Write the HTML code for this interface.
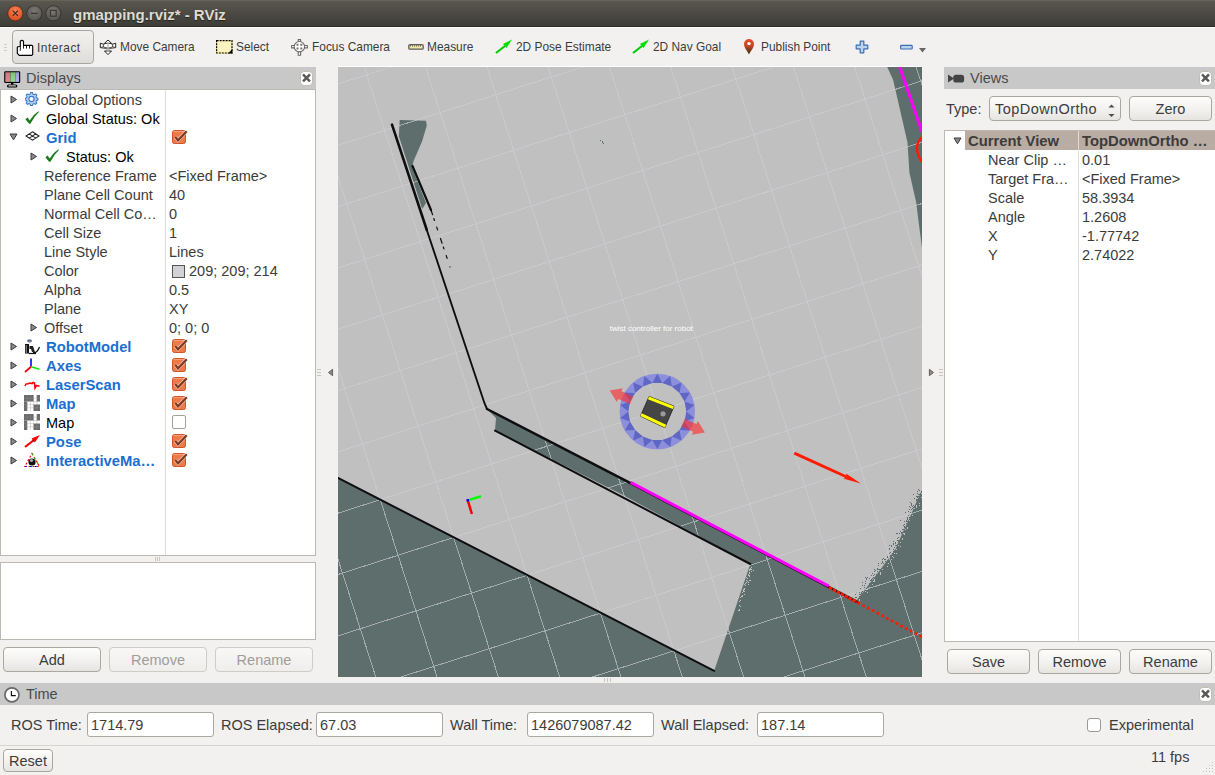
<!DOCTYPE html>
<html><head><meta charset="utf-8">
<style>
*{box-sizing:border-box}
html,body{margin:0;padding:0}
body{width:1215px;height:775px;position:relative;overflow:hidden;background:#f2f1f0;font-family:"Liberation Sans",sans-serif;color:#3c3c3c}
.a{position:absolute}
.t{position:absolute;white-space:nowrap}
.tb{position:absolute;font-size:11.9px;line-height:15px;top:40px;color:#3c3c3c;white-space:nowrap}
.hdr{position:absolute;background:#c8c8c8;height:22px;top:67px}
.r{position:absolute;height:19px;line-height:19px;font-size:14.5px;white-space:nowrap;color:#3c3c3c}
.bl{color:#1b6fd0;font-weight:bold;font-size:14.8px}
.bk{color:#000}
.cb{position:absolute;left:172px;width:14px;height:14px}
.btn{position:absolute;padding-top:1px;border:1px solid #aaa7a1;border-radius:4px;background:linear-gradient(#fdfdfc,#f1f0ee 60%,#e6e4e1);font-size:14.5px;line-height:22px;text-align:center;color:#3c3c3c}
.dis{color:#a09d98;border-color:#cfccc7;background:linear-gradient(#f8f7f6,#efeeec)}
.inp{position:absolute;background:#fff;border:1px solid #aba8a2;border-radius:3px;font-size:14.5px;line-height:22px;padding-left:3px;padding-top:1px;color:#3c3c3c;top:712px;height:25px}
.close{position:absolute;width:13px;height:15px;background:#fff;border:1px solid #c0bbb4;border-radius:4px}
</style></head>
<body>
<!-- Title bar -->
<div class="a" style="left:0;top:0;width:1215px;height:27px;background:linear-gradient(#5a574f,#3e3d38 96%);border-top:1px solid #66635a;border-bottom:1px solid #2f2e2a"></div>
<svg class="a" style="left:0;top:0" width="70" height="27">
  <defs>
    <radialGradient id="gc" cx="50%" cy="35%" r="65%"><stop offset="0" stop-color="#f68458"/><stop offset="1" stop-color="#dc4a1b"/></radialGradient>
    <radialGradient id="gg" cx="50%" cy="35%" r="65%"><stop offset="0" stop-color="#7a7871"/><stop offset="1" stop-color="#57554f"/></radialGradient>
  </defs>
  <circle cx="15.3" cy="13.3" r="7.6" fill="url(#gc)" stroke="#2f2a25" stroke-width="0.7"/>
  <path d="M12.7 10.7 L17.9 15.9 M17.9 10.7 L12.7 15.9" stroke="#3a2a20" stroke-width="1.2"/>
  <circle cx="34.3" cy="13.3" r="7.6" fill="url(#gg)" stroke="#2b2a27" stroke-width="0.7"/>
  <path d="M30.9 13.4 H37.7" stroke="#3a3935" stroke-width="1.3"/>
  <circle cx="53.3" cy="13.3" r="7.6" fill="url(#gg)" stroke="#2b2a27" stroke-width="0.7"/>
  <rect x="50.4" y="10.4" width="5.8" height="5.8" fill="none" stroke="#3a3935" stroke-width="1.2"/>
</svg>
<div class="t" style="left:73px;top:5px;font-size:15px;line-height:19px;font-weight:bold;color:#dfdbd2;text-shadow:0 1px 1px rgba(0,0,0,0.5)">gmapping.rviz* - RViz</div>

<!-- Toolbar -->
<div class="a" style="left:0;top:27px;width:1215px;height:1px;background:#fbfaf9"></div>
<div class="a" style="left:4px;top:44px;width:3px;height:1px;background:#cfccc6;box-shadow:0 3px 0 #cfccc6,0 6px 0 #cfccc6"></div>
<div class="a" style="left:12px;top:30px;width:82px;height:34px;border:1px solid #a9a6a0;border-radius:4px;background:linear-gradient(#f1f0ef,#e9e8e6 50%,#dedcd9)"></div>
<svg class="a" style="left:12px;top:34px" width="28" height="26" viewBox="0 0 28 26">
  <path d="M7.2 21.3 L5.3 19.4 L5.3 13 L8.3 12.3 L8.3 7.2 Q9.9 5.6 11.5 7.2 L11.5 11.3 L20 11.3 L20.7 12.2 L20.7 20.4 L19.8 21.3 Z" fill="#fff" stroke="#000" stroke-width="1.15" stroke-linejoin="round"/>
  <path d="M8.3 12.3 V16.8 M11.5 11.3 V14.6 M14.5 11.6 V14.6 M17.5 11.6 V14.6" stroke="#000" stroke-width="0.9"/>
</svg>
<div class="tb" style="left:37px;top:41px;letter-spacing:0.5px">Interact</div>
<svg class="a" style="left:95px;top:34px" width="30" height="26" viewBox="0 0 30 26">
  <path d="M5.3 9.2 L9.5 10.6 L9.5 12.6 L5.3 13.6 Z M20.7 9.2 L16.5 10.6 L16.5 12.6 L20.7 13.6 Z M8.8 10 L13 6 L17.2 10 Z M9.5 17 L13 20.6 L16.5 17 Z" fill="#fff" stroke="#222" stroke-width="1" stroke-linejoin="round"/>
  <ellipse cx="13" cy="11.6" rx="4.6" ry="2.4" fill="#fff" stroke="#333" stroke-width="1"/>
  <path d="M5.3 13.6 Q13 16.5 20.7 13.6" fill="none" stroke="#555" stroke-width="0.9"/>
  <path d="M13 8.5 V17.5" stroke="#b8b8b8" stroke-width="1.3"/>
</svg>
<div class="tb" style="left:120px">Move Camera</div>
<svg class="a" style="left:216px;top:40px" width="17" height="14" viewBox="0 0 17 14"><rect x="0.6" y="0.6" width="15.4" height="12.4" fill="#faf2c0" stroke="#fff67a" stroke-width="1"/><rect x="0.6" y="0.6" width="15.4" height="12.4" fill="none" stroke="#000" stroke-width="1.2" stroke-dasharray="2 1"/><path d="M16.4 9 L16.4 13.4 L12 13.4 Z" fill="#000"/></svg>
<div class="tb" style="left:236px">Select</div>
<svg class="a" style="left:286px;top:34px" width="30" height="26" viewBox="0 0 30 26">
  <path d="M12.2 5.6 H14.6 V11.5 H21.4 V13.9 H14.6 V21.2 H12.2 V13.9 H5.6 V11.5 H12.2 Z" fill="#fff" stroke="#6a6a6a" stroke-width="1.1" stroke-linejoin="round"/>
  <circle cx="13.4" cy="12.7" r="5.2" fill="#fff" stroke="#6a6a6a" stroke-width="1.1"/>
  <path d="M10.5 9.8 h2 v2 h-2 Z M14.3 9.8 h2 v2 h-2 Z M10.5 13.6 h2 v2 h-2 Z M14.3 13.6 h2 v2 h-2 Z" fill="#777"/>
</svg>
<div class="tb" style="left:312px">Focus Camera</div>
<svg class="a" style="left:400px;top:34px" width="30" height="26" viewBox="0 0 30 26">
  <rect x="8.8" y="10.6" width="14.4" height="4.6" rx="1.2" fill="#f4e8a6" stroke="#5c5c5c" stroke-width="1.3"/>
  <path d="M10.5 11 V12.6 M12.5 11 V12.6 M14.5 11 V12.6 M16.5 11 V12.6 M18.5 11 V12.6 M20.5 11 V12.6" stroke="#666" stroke-width="0.9"/>
</svg>
<div class="tb" style="left:427px">Measure</div>
<svg class="a" style="left:495px;top:39px" width="18" height="15" viewBox="0 0 18 15">
  <path d="M1 14 L10 7" stroke="#0c0" stroke-width="2.2"/><path d="M17 0.5 L8 5 L11.5 9 Z" fill="#0d0"/>
</svg>
<div class="tb" style="left:516px">2D Pose Estimate</div>
<svg class="a" style="left:632px;top:39px" width="18" height="15" viewBox="0 0 18 15">
  <path d="M1 14 L10 7" stroke="#0c0" stroke-width="2.2"/><path d="M17 0.5 L8 5 L11.5 9 Z" fill="#0d0"/>
</svg>
<div class="tb" style="left:653px">2D Nav Goal</div>
<svg class="a" style="left:743px;top:38px" width="13" height="18" viewBox="0 0 13 18">
  <defs><linearGradient id="pin" x1="0" y1="0" x2="0" y2="1"><stop offset="0" stop-color="#ea4a22"/><stop offset="0.45" stop-color="#c04a25"/><stop offset="1" stop-color="#3e2a05"/></linearGradient></defs>
  <path d="M6 16.4 C4.6 13 1 10 1 6 A5 5 0 0 1 11 6 C11 10 7.4 13 6 16.4 Z" fill="url(#pin)"/><circle cx="6" cy="5.6" r="1.7" fill="#fff"/>
</svg>
<div class="tb" style="left:761px">Publish Point</div>
<svg class="a" style="left:855px;top:40px" width="14" height="14" viewBox="0 0 14 14">
  <path d="M5.2 1.2 H8.8 V5.2 H12.8 V8.8 H8.8 V12.8 H5.2 V8.8 H1.2 V5.2 H5.2 Z" fill="#bcd3ee" stroke="#3b6fb3" stroke-width="1.2" stroke-linejoin="round"/>
</svg>
<svg class="a" style="left:899px;top:44px" width="30" height="10" viewBox="0 0 30 10">
  <rect x="1.6" y="1.4" width="11.6" height="3.6" rx="0.8" fill="#bcd3ee" stroke="#3b6fb3" stroke-width="1.2"/>
  <path d="M20 4 H27 L23.5 8.6 Z" fill="#666"/>
</svg>

<!-- Displays panel -->
<div class="hdr" style="left:0;width:316px"></div>
<svg class="a" style="left:4px;top:71px" width="17" height="17" viewBox="0 0 17 17">
  <defs><linearGradient id="scr" x1="0" y1="0" x2="0" y2="1"><stop offset="0" stop-opacity="0.12"/><stop offset="1" stop-opacity="0"/></linearGradient></defs>
  <rect x="0.2" y="0.2" width="16" height="11.8" rx="1.2" fill="#000"/>
  <rect x="1.3" y="1.3" width="5.1" height="9.6" fill="#e08a8a"/><rect x="6.4" y="1.3" width="4.9" height="9.6" fill="#8fdc8c"/><rect x="11.3" y="1.3" width="3.8" height="9.6" fill="#b0b0f6"/>
  <rect x="1.3" y="1.3" width="13.8" height="9.6" fill="url(#scr)"/>
  <rect x="7" y="12" width="2.4" height="1.6" fill="#000"/>
  <rect x="3" y="13.4" width="10.4" height="3.2" rx="1.6" fill="#000"/><rect x="4.4" y="14.3" width="7.6" height="1.1" rx="0.5" fill="#c8c8c8"/>
</svg>
<div class="t" style="left:26px;top:67px;font-size:14.5px;line-height:22px;color:#4a4a4a">Displays</div>
<div class="close" style="left:300px;top:71px"></div>
<svg class="a" style="left:300px;top:71px" width="13" height="14" viewBox="0 0 13 14"><path d="M3.9 4.3 L9.1 9.6 M9.1 4.3 L3.9 9.6" stroke="#5a5a5a" stroke-width="2.5" stroke-linecap="square"/></svg>

<div class="a" style="left:0;top:89px;width:316px;height:467px;background:#fff;border:1px solid #bcb9b3"></div>
<div class="a" style="left:165px;top:90px;width:1px;height:465px;background:#dedede"></div>
<div class="a" style="left:155px;top:557px;width:1px;height:4px;background:#c8c5bf;box-shadow:2px 0 0 #c8c5bf,4px 0 0 #c8c5bf"></div>
<div class="a" style="left:0;top:562px;width:316px;height:78px;background:#fff;border:1px solid #bcb9b3"></div>

<div id="tree"><svg class="a" style="left:10px;top:95px" width="8" height="9" viewBox="0 0 8 9"><path d="M1 1 L6.5 4.5 L1 8 Z" fill="#8a8a8a" stroke="#3a3a3a" stroke-width="1" stroke-linejoin="round"/></svg>
<svg class="a" style="left:25px;top:92px" width="14" height="14" viewBox="0 0 14 14"><g fill="#b8cff0" stroke="#3a78c8" stroke-width="1.1"><path d="M6 0.6 H8 L8.4 2.3 L9.8 2.9 L11.3 2 L12.7 3.4 L11.8 4.9 L12.4 6.3 L13.9 6.7 V8.7 L12.4 9.1 L11.8 10.5 L12.7 12 L11.3 13.4 L9.8 12.5 L8.4 13.1 L8 14.6 H6 L5.6 13.1 L4.2 12.5 L2.7 13.4 L1.3 12 L2.2 10.5 L1.6 9.1 L0.1 8.7 V6.7 L1.6 6.3 L2.2 4.9 L1.3 3.4 L2.7 2 L4.2 2.9 L5.6 2.3 Z" transform="scale(0.93)"/></g><circle cx="6.5" cy="7" r="2.6" fill="#fff" stroke="#3a78c8" stroke-width="1.1"/></svg>
<div class="r " style="left:46px;top:91px">Global Options</div>
<svg class="a" style="left:10px;top:114px" width="8" height="9" viewBox="0 0 8 9"><path d="M1 1 L6.5 4.5 L1 8 Z" fill="#8a8a8a" stroke="#3a3a3a" stroke-width="1" stroke-linejoin="round"/></svg>
<svg class="a" style="left:25px;top:111px" width="14" height="13" viewBox="0 0 14 13"><path d="M0.4 8.2 L2.6 6.6 L4.7 9.5 Q8.2 3.6 13.4 0.3 L13.9 0.9 Q9.2 5.2 5.4 12.7 L4.1 12.7 Z" fill="#187a18"/></svg>
<div class="r bk" style="left:46px;top:110px">Global Status: Ok</div>
<svg class="a" style="left:9px;top:133px" width="9" height="8" viewBox="0 0 9 8"><path d="M1 1 L8 1 L4.5 6.8 Z" fill="#8a8a8a" stroke="#3a3a3a" stroke-width="1" stroke-linejoin="round"/></svg>
<svg class="a" style="left:25px;top:131px" width="15" height="10" viewBox="0 0 15 10"><path d="M7.5 0.8 L14 5 L7.5 9.2 L1 5 Z M4.25 2.9 L10.75 7.1 M10.75 2.9 L4.25 7.1" fill="none" stroke="#222" stroke-width="1.1"/></svg>
<div class="r bl" style="left:46px;top:129px">Grid</div>
<svg class="a" style="left:172px;top:130px" width="16" height="15" viewBox="0 0 16 15"><rect x="0.5" y="0.5" width="13" height="13" rx="2" fill="#ee7a4a" stroke="#cf5526"/><path d="M1.5 1.5 H12.5" stroke="#f7a07c" stroke-width="1"/><path d="M3.3 6.8 L6 10.3 L14.8 1.2" fill="none" stroke="#fff" stroke-opacity="0.55" stroke-width="3.6"/><path d="M3.3 6.8 L6 10.3 L14.8 1.2" fill="none" stroke="#7d3a22" stroke-width="2.2"/></svg>
<svg class="a" style="left:30px;top:152px" width="8" height="9" viewBox="0 0 8 9"><path d="M1 1 L6.5 4.5 L1 8 Z" fill="#8a8a8a" stroke="#3a3a3a" stroke-width="1" stroke-linejoin="round"/></svg>
<svg class="a" style="left:45px;top:149px" width="14" height="13" viewBox="0 0 14 13"><path d="M0.4 8.2 L2.6 6.6 L4.7 9.5 Q8.2 3.6 13.4 0.3 L13.9 0.9 Q9.2 5.2 5.4 12.7 L4.1 12.7 Z" fill="#187a18"/></svg>
<div class="r bk" style="left:66px;top:148px">Status: Ok</div>
<div class="r " style="left:44px;top:167px">Reference Frame</div>
<div class="r " style="left:169px;top:167px">&lt;Fixed Frame&gt;</div>
<div class="r " style="left:44px;top:186px">Plane Cell Count</div>
<div class="r " style="left:169px;top:186px">40</div>
<div class="r " style="left:44px;top:205px">Normal Cell Co…</div>
<div class="r " style="left:169px;top:205px">0</div>
<div class="r " style="left:44px;top:224px">Cell Size</div>
<div class="r " style="left:169px;top:224px">1</div>
<div class="r " style="left:44px;top:243px">Line Style</div>
<div class="r " style="left:169px;top:243px">Lines</div>
<div class="r " style="left:44px;top:262px">Color</div>
<div class="a" style="left:172px;top:265px;width:13px;height:13px;background:#d1d1d6;border:1px solid #555"></div>
<div class="r " style="left:189px;top:262px">209; 209; 214</div>
<div class="r " style="left:44px;top:281px">Alpha</div>
<div class="r " style="left:169px;top:281px">0.5</div>
<div class="r " style="left:44px;top:300px">Plane</div>
<div class="r " style="left:169px;top:300px">XY</div>
<div class="r " style="left:44px;top:319px">Offset</div>
<div class="r " style="left:169px;top:319px">0; 0; 0</div>
<svg class="a" style="left:30px;top:323px" width="8" height="9" viewBox="0 0 8 9"><path d="M1 1 L6.5 4.5 L1 8 Z" fill="#8a8a8a" stroke="#3a3a3a" stroke-width="1" stroke-linejoin="round"/></svg>
<svg class="a" style="left:10px;top:342px" width="8" height="9" viewBox="0 0 8 9"><path d="M1 1 L6.5 4.5 L1 8 Z" fill="#8a8a8a" stroke="#3a3a3a" stroke-width="1" stroke-linejoin="round"/></svg>
<svg class="a" style="left:24px;top:339px" width="17" height="16" viewBox="0 0 17 16"><ellipse cx="5.5" cy="2" rx="2.4" ry="1.4" fill="#2a4aa0"/><path d="M3.5 2.2 H7.5" stroke="#d8c070" stroke-width="0.8"/><path d="M1 5 H5 V14.5 H1 Z" fill="#111"/><path d="M2.2 6 V14" stroke="#fff" stroke-width="0.6"/><path d="M5.5 7 H9 L11 13 H8 L7 10 H5.5 Z" fill="#222"/><path d="M9 13.5 Q13 14.5 15.5 8" fill="none" stroke="#111" stroke-width="1.3"/><path d="M5 14.5 H12" stroke="#111" stroke-width="1.2"/></svg>
<div class="r bl" style="left:46px;top:338px">RobotModel</div>
<svg class="a" style="left:172px;top:339px" width="16" height="15" viewBox="0 0 16 15"><rect x="0.5" y="0.5" width="13" height="13" rx="2" fill="#ee7a4a" stroke="#cf5526"/><path d="M1.5 1.5 H12.5" stroke="#f7a07c" stroke-width="1"/><path d="M3.3 6.8 L6 10.3 L14.8 1.2" fill="none" stroke="#fff" stroke-opacity="0.55" stroke-width="3.6"/><path d="M3.3 6.8 L6 10.3 L14.8 1.2" fill="none" stroke="#7d3a22" stroke-width="2.2"/></svg>
<svg class="a" style="left:10px;top:361px" width="8" height="9" viewBox="0 0 8 9"><path d="M1 1 L6.5 4.5 L1 8 Z" fill="#8a8a8a" stroke="#3a3a3a" stroke-width="1" stroke-linejoin="round"/></svg>
<svg class="a" style="left:24px;top:357px" width="17" height="16" viewBox="0 0 17 16"><path d="M7 9.8 V1.5" stroke="#00f" stroke-width="1.6"/><path d="M7 9.8 L1 15" stroke="#f00" stroke-width="1.8"/><path d="M7 9.8 L15.5 12.3" stroke="#0e0" stroke-width="1.6"/></svg>
<div class="r bl" style="left:46px;top:357px">Axes</div>
<svg class="a" style="left:172px;top:358px" width="16" height="15" viewBox="0 0 16 15"><rect x="0.5" y="0.5" width="13" height="13" rx="2" fill="#ee7a4a" stroke="#cf5526"/><path d="M1.5 1.5 H12.5" stroke="#f7a07c" stroke-width="1"/><path d="M3.3 6.8 L6 10.3 L14.8 1.2" fill="none" stroke="#fff" stroke-opacity="0.55" stroke-width="3.6"/><path d="M3.3 6.8 L6 10.3 L14.8 1.2" fill="none" stroke="#7d3a22" stroke-width="2.2"/></svg>
<svg class="a" style="left:10px;top:380px" width="8" height="9" viewBox="0 0 8 9"><path d="M1 1 L6.5 4.5 L1 8 Z" fill="#8a8a8a" stroke="#3a3a3a" stroke-width="1" stroke-linejoin="round"/></svg>
<svg class="a" style="left:24px;top:376px" width="17" height="16" viewBox="0 0 17 16"><path d="M1 10 L2 8 L4 7.8 L6 7 L8 7.5 L9 6.5 L10.5 7 L11 12 L12.5 9.5 L14 10 L15.5 10" fill="none" stroke="#f00" stroke-width="1.6"/></svg>
<div class="r bl" style="left:46px;top:376px">LaserScan</div>
<svg class="a" style="left:172px;top:377px" width="16" height="15" viewBox="0 0 16 15"><rect x="0.5" y="0.5" width="13" height="13" rx="2" fill="#ee7a4a" stroke="#cf5526"/><path d="M1.5 1.5 H12.5" stroke="#f7a07c" stroke-width="1"/><path d="M3.3 6.8 L6 10.3 L14.8 1.2" fill="none" stroke="#fff" stroke-opacity="0.55" stroke-width="3.6"/><path d="M3.3 6.8 L6 10.3 L14.8 1.2" fill="none" stroke="#7d3a22" stroke-width="2.2"/></svg>
<svg class="a" style="left:10px;top:399px" width="8" height="9" viewBox="0 0 8 9"><path d="M1 1 L6.5 4.5 L1 8 Z" fill="#8a8a8a" stroke="#3a3a3a" stroke-width="1" stroke-linejoin="round"/></svg>
<svg class="a" style="left:24px;top:395px" width="16" height="16" viewBox="0 0 16 16"><rect width="16" height="16" fill="#fff"/><g fill="#6a6a6a"><rect x="0" y="0" width="9.6" height="6.4"/><rect x="0" y="6.4" width="3.2" height="9.6"/><rect x="12.8" y="0" width="3.2" height="6.4"/><rect x="9.6" y="9.6" width="6.4" height="6.4"/></g><path d="M3.2 0V16M6.4 0V16M9.6 0V16M12.8 0V16M0 3.2H16M0 6.4H16M0 9.6H16M0 12.8H16" stroke="#999" stroke-width="0.5" stroke-opacity="0.7"/></svg>
<div class="r bl" style="left:46px;top:395px">Map</div>
<svg class="a" style="left:172px;top:396px" width="16" height="15" viewBox="0 0 16 15"><rect x="0.5" y="0.5" width="13" height="13" rx="2" fill="#ee7a4a" stroke="#cf5526"/><path d="M1.5 1.5 H12.5" stroke="#f7a07c" stroke-width="1"/><path d="M3.3 6.8 L6 10.3 L14.8 1.2" fill="none" stroke="#fff" stroke-opacity="0.55" stroke-width="3.6"/><path d="M3.3 6.8 L6 10.3 L14.8 1.2" fill="none" stroke="#7d3a22" stroke-width="2.2"/></svg>
<svg class="a" style="left:10px;top:418px" width="8" height="9" viewBox="0 0 8 9"><path d="M1 1 L6.5 4.5 L1 8 Z" fill="#8a8a8a" stroke="#3a3a3a" stroke-width="1" stroke-linejoin="round"/></svg>
<svg class="a" style="left:24px;top:414px" width="16" height="16" viewBox="0 0 16 16"><rect width="16" height="16" fill="#fff"/><g fill="#6a6a6a"><rect x="0" y="0" width="9.6" height="6.4"/><rect x="0" y="6.4" width="3.2" height="9.6"/><rect x="12.8" y="0" width="3.2" height="6.4"/><rect x="9.6" y="9.6" width="6.4" height="6.4"/></g><path d="M3.2 0V16M6.4 0V16M9.6 0V16M12.8 0V16M0 3.2H16M0 6.4H16M0 9.6H16M0 12.8H16" stroke="#999" stroke-width="0.5" stroke-opacity="0.7"/></svg>
<div class="r bk" style="left:46px;top:414px">Map</div>
<div class="a" style="left:172px;top:415px;width:14px;height:14px;background:#fff;border:1px solid #a3a09a;border-radius:2px"></div>
<svg class="a" style="left:10px;top:437px" width="8" height="9" viewBox="0 0 8 9"><path d="M1 1 L6.5 4.5 L1 8 Z" fill="#8a8a8a" stroke="#3a3a3a" stroke-width="1" stroke-linejoin="round"/></svg>
<svg class="a" style="left:24px;top:433px" width="17" height="16" viewBox="0 0 17 16"><path d="M1 14 L10 7" stroke="#f00" stroke-width="2.2"/><path d="M16 2 L7.5 5.5 L11 9.2 Z" fill="#f00"/><path d="M8.5 7 L10.5 8.5" stroke="#300" stroke-width="1"/></svg>
<div class="r bl" style="left:46px;top:433px">Pose</div>
<svg class="a" style="left:172px;top:434px" width="16" height="15" viewBox="0 0 16 15"><rect x="0.5" y="0.5" width="13" height="13" rx="2" fill="#ee7a4a" stroke="#cf5526"/><path d="M1.5 1.5 H12.5" stroke="#f7a07c" stroke-width="1"/><path d="M3.3 6.8 L6 10.3 L14.8 1.2" fill="none" stroke="#fff" stroke-opacity="0.55" stroke-width="3.6"/><path d="M3.3 6.8 L6 10.3 L14.8 1.2" fill="none" stroke="#7d3a22" stroke-width="2.2"/></svg>
<svg class="a" style="left:10px;top:456px" width="8" height="9" viewBox="0 0 8 9"><path d="M1 1 L6.5 4.5 L1 8 Z" fill="#8a8a8a" stroke="#3a3a3a" stroke-width="1" stroke-linejoin="round"/></svg>
<svg class="a" style="left:24px;top:452px" width="17" height="16" viewBox="0 0 17 16"><path d="M8 1.5 L15.5 14.5 H0.8 Z" fill="none" stroke="#f00" stroke-width="1.2" stroke-dasharray="2 2"/><path d="M8 1.5 L15.5 14.5" stroke="#0c0" stroke-width="1.2" stroke-dasharray="2 3"/><path d="M0.8 14.5 H15.5" stroke="#00f" stroke-width="1.2" stroke-dasharray="2 3"/><circle cx="8" cy="10" r="3.6" fill="#111"/><circle cx="7.5" cy="8.5" r="1.6" fill="#aaa"/></svg>
<div class="r bl" style="left:46px;top:452px">InteractiveMa…</div>
<svg class="a" style="left:172px;top:453px" width="16" height="15" viewBox="0 0 16 15"><rect x="0.5" y="0.5" width="13" height="13" rx="2" fill="#ee7a4a" stroke="#cf5526"/><path d="M1.5 1.5 H12.5" stroke="#f7a07c" stroke-width="1"/><path d="M3.3 6.8 L6 10.3 L14.8 1.2" fill="none" stroke="#fff" stroke-opacity="0.55" stroke-width="3.6"/><path d="M3.3 6.8 L6 10.3 L14.8 1.2" fill="none" stroke="#7d3a22" stroke-width="2.2"/></svg></div><!--/tree-->

<div class="btn" style="left:3px;top:647px;width:98px;height:25px">Add</div>
<div class="btn dis" style="left:109px;top:647px;width:98px;height:25px">Remove</div>
<div class="btn dis" style="left:215px;top:647px;width:98px;height:25px">Rename</div>

<!-- splitter arrows -->
<svg class="a" style="left:327px;top:368px" width="7" height="9"><path d="M1.5 4.5 L5.6 1.3 V7.7 Z" fill="#8c8c8c" stroke="#606060" stroke-width="1" stroke-linejoin="round"/></svg>
<svg class="a" style="left:928px;top:368px" width="7" height="9"><path d="M5.5 4.5 L1.4 1.3 V7.7 Z" fill="#8c8c8c" stroke="#606060" stroke-width="1" stroke-linejoin="round"/></svg>
<div class="a" style="left:317px;top:369px;width:4px;height:1px;background:#c9c4bc;box-shadow:0 3px 0 #c9c4bc,0 6px 0 #c9c4bc"></div>
<div class="a" style="left:939px;top:369px;width:4px;height:1px;background:#c9c4bc;box-shadow:0 3px 0 #c9c4bc,0 6px 0 #c9c4bc"></div>

<!-- 3D view -->
<div class="a" style="left:338px;top:66px;width:584px;height:1px;background:#fff"></div>
<svg class="a" style="left:338px;top:67px" width="584" height="610" viewBox="0 0 584 610">
  <rect x="0" y="0" width="584" height="610" fill="#5d6e6c"/>
  <path d="M0 0 L549.2 0 L555 12.6 L558 25.2 L569.5 75.5 L571.4 105.5 L578.2 135.5 L580 150 L584 181 L584.0 423.0 L577.0 438.0 L571.8 450.4 L564.0 467.0 L557.2 482.7 L548.0 495.0 L539.6 506.2 L529.0 520.0 L519.0 533.0 L292.6 416.4 L274 406 L149 342 L158 351 L157 363.6 L284 427.6 L412.3 497 L376.2 603.8 L0 411 Z" fill="#c0c0c0"/>
  <g id="speck"><path d="M575 427h1v1h-1zM578 429h1v1h-1zM579 430h1v1h-1zM579 430h1v1h-1zM579 432h1v1h-1zM580 427h1v1h-1zM581 423h1v1h-1zM580 422h1v1h-1zM573 436h1v1h-1zM578 432h1v1h-1zM579 424h1v1h-1zM583 424h1v1h-1zM582 426h1v1h-1zM580 429h1v1h-1zM579 429h1v1h-1zM576 431h1v1h-1zM579 430h1v1h-1zM579 426h1v1h-1zM572 435h1v1h-1zM578 433h1v1h-1zM581 427h1v1h-1zM573 442h1v1h-1zM573 437h1v1h-1zM572 440h1v1h-1zM573 438h1v1h-1zM567 445h1v1h-1zM576 439h1v1h-1zM575 438h1v1h-1zM571 447h1v1h-1zM571 442h1v1h-1zM575 440h1v1h-1zM572 445h1v1h-1zM574 439h1v1h-1zM574 441h1v1h-1zM571 450h1v1h-1zM570 448h1v1h-1zM571 439h1v1h-1zM570 444h1v1h-1zM566 460h1v1h-1zM562 453h1v1h-1zM566 457h1v1h-1zM566 459h1v1h-1zM569 452h1v1h-1zM563 465h1v1h-1zM568 453h1v1h-1zM564 462h1v1h-1zM563 466h1v1h-1zM562 464h1v1h-1zM569 451h1v1h-1zM569 450h1v1h-1zM565 462h1v1h-1zM568 454h1v1h-1zM566 454h1v1h-1zM570 453h1v1h-1zM569 454h1v1h-1zM565 458h1v1h-1zM566 454h1v1h-1zM564 465h1v1h-1zM569 454h1v1h-1zM566 457h1v1h-1zM568 456h1v1h-1zM559 477h1v1h-1zM560 474h1v1h-1zM555 482h1v1h-1zM559 466h1v1h-1zM556 480h1v1h-1zM557 478h1v1h-1zM553 479h1v1h-1zM559 471h1v1h-1zM553 478h1v1h-1zM559 473h1v1h-1zM555 474h1v1h-1zM557 476h1v1h-1zM557 475h1v1h-1zM558 466h1v1h-1zM551 478h1v1h-1zM555 477h1v1h-1zM557 475h1v1h-1zM560 473h1v1h-1zM558 478h1v1h-1zM561 466h1v1h-1zM560 470h1v1h-1zM555 476h1v1h-1zM549 490h1v1h-1zM551 482h1v1h-1zM547 492h1v1h-1zM546 492h1v1h-1zM552 485h1v1h-1zM551 481h1v1h-1zM549 493h1v1h-1zM549 490h1v1h-1zM555 484h1v1h-1zM552 488h1v1h-1zM551 486h1v1h-1zM549 489h1v1h-1zM549 493h1v1h-1zM547 494h1v1h-1zM556 483h1v1h-1zM545 491h1v1h-1zM551 489h1v1h-1zM554 486h1v1h-1zM555 484h1v1h-1zM541 502h1v1h-1zM544 495h1v1h-1zM544 492h1v1h-1zM545 496h1v1h-1zM543 496h1v1h-1zM540 498h1v1h-1zM542 502h1v1h-1zM539 502h1v1h-1zM536 502h1v1h-1zM539 501h1v1h-1zM544 494h1v1h-1zM539 504h1v1h-1zM540 496h1v1h-1zM539 502h1v1h-1zM537 503h1v1h-1zM545 496h1v1h-1zM540 502h1v1h-1zM539 501h1v1h-1zM534 511h1v1h-1zM533 513h1v1h-1zM536 504h1v1h-1zM527 514h1v1h-1zM536 507h1v1h-1zM535 510h1v1h-1zM536 507h1v1h-1zM533 512h1v1h-1zM528 512h1v1h-1zM524 515h1v1h-1zM538 507h1v1h-1zM535 508h1v1h-1zM531 516h1v1h-1zM528 511h1v1h-1zM533 513h1v1h-1zM533 508h1v1h-1zM527 516h1v1h-1zM534 506h1v1h-1zM529 510h1v1h-1zM532 513h1v1h-1zM531 511h1v1h-1zM527 510h1v1h-1zM523 525h1v1h-1zM524 518h1v1h-1zM518 530h1v1h-1zM523 525h1v1h-1zM521 527h1v1h-1zM517 530h1v1h-1zM526 518h1v1h-1zM526 522h1v1h-1zM522 521h1v1h-1zM524 524h1v1h-1zM521 529h1v1h-1zM526 520h1v1h-1zM527 522h1v1h-1zM521 525h1v1h-1zM524 524h1v1h-1zM523 526h1v1h-1zM521 527h1v1h-1zM518 525h1v1h-1zM522 527h1v1h-1zM520 531h1v1h-1zM517 527h1v1h-1z" fill="#5d6e6c"/><path d="M585 425h1v1h-1zM581 436h1v1h-1zM583 430h1v1h-1zM578 438h1v1h-1zM583 426h1v1h-1zM581 438h1v1h-1zM578 440h1v1h-1zM576 441h1v1h-1zM574 448h1v1h-1zM578 439h1v1h-1zM578 440h1v1h-1zM569 460h1v1h-1zM566 466h1v1h-1zM566 467h1v1h-1zM569 461h1v1h-1zM571 453h1v1h-1zM565 466h1v1h-1zM567 462h1v1h-1zM558 482h1v1h-1zM564 472h1v1h-1zM560 478h1v1h-1zM564 471h1v1h-1zM562 479h1v1h-1zM562 475h1v1h-1zM555 490h1v1h-1zM556 486h1v1h-1zM558 486h1v1h-1zM554 489h1v1h-1zM553 492h1v1h-1zM550 496h1v1h-1zM549 499h1v1h-1zM542 507h1v1h-1zM544 502h1v1h-1zM542 506h1v1h-1zM542 505h1v1h-1zM535 514h1v1h-1zM536 512h1v1h-1zM536 514h1v1h-1zM534 517h1v1h-1zM536 513h1v1h-1zM531 520h1v1h-1zM521 532h1v1h-1zM521 533h1v1h-1zM529 525h1v1h-1zM528 522h1v1h-1zM527 524h1v1h-1zM529 522h1v1h-1zM580 417h1v1h-1zM582 406h1v1h-1zM580 420h1v1h-1zM583 403h1v1h-1zM582 418h1v1h-1zM581 411h1v1h-1zM583 422h1v1h-1zM581 416h1v1h-1zM582 402h1v1h-1zM580 403h1v1h-1zM583 401h1v1h-1zM580 404h1v1h-1zM410 507h1v1h-1zM411 505h1v1h-1zM409 511h1v1h-1zM413 504h1v1h-1zM402 530h1v1h-1zM407 516h1v1h-1zM407 518h1v1h-1zM408 515h1v1h-1zM404 528h1v1h-1zM406 517h1v1h-1zM410 515h1v1h-1zM406 527h1v1h-1zM412 502h1v1h-1zM413 502h1v1h-1zM402 539h1v1h-1zM400 543h1v1h-1zM404 525h1v1h-1zM409 514h1v1h-1zM401 534h1v1h-1zM402 533h1v1h-1zM411 505h1v1h-1zM408 513h1v1h-1zM405 523h1v1h-1zM411 506h1v1h-1zM411 508h1v1h-1zM411 513h1v1h-1zM415 503h1v1h-1zM401 542h1v1h-1zM413 500h1v1h-1zM412 513h1v1h-1zM410 508h1v1h-1zM412 501h1v1h-1zM406 522h1v1h-1zM411 503h1v1h-1zM407 516h1v1h-1zM411 502h1v1h-1zM411 509h1v1h-1zM401 534h1v1h-1zM404 529h1v1h-1zM408 510h1v1h-1zM409 514h1v1h-1zM405 522h1v1h-1zM401 538h1v1h-1zM403 529h1v1h-1zM406 524h1v1h-1zM410 517h1v1h-1zM401 543h1v1h-1zM402 539h1v1h-1zM405 524h1v1h-1zM406 521h1v1h-1z" fill="#c0c0c0"/></g>
  <path d="M61.7 53.1 L88 53.8 L88.8 58.5 L84.2 74 L75.6 94.1 L74.1 100.3 L88 135.9 L84.2 142.1 L60.9 69.3 Z" fill="#5d6e6c"/>
  <path d="M-1.0 17.3L56.2 -1.0M-1.0 78.6L247.6 -1.0M-1.0 139.9L439.0 -1.0M-1.0 201.3L585.0 13.5M-1.0 262.6L585.0 74.9M-1.0 323.9L585.0 136.2M-1.0 489.1L38.1 611.0M-1.0 385.2L585.0 197.5M-1.0 297.7L99.4 611.0M-1.0 446.5L585.0 258.8M-1.0 106.2L160.7 611.0M-1.0 507.8L585.0 320.1M26.0 -1.0L222.0 611.0M-1.0 569.2L585.0 381.4M87.3 -1.0L283.3 611.0M59.8 611.0L585.0 442.8M148.6 -1.0L344.6 611.0M251.2 611.0L585.0 504.1M209.9 -1.0L405.9 611.0M442.6 611.0L585.0 565.4M271.2 -1.0L467.3 611.0M332.5 -1.0L528.6 611.0M393.9 -1.0L585.0 595.7M455.2 -1.0L585.0 404.3M516.5 -1.0L585.0 212.9M577.8 -1.0L585.0 21.5" stroke="#d1d1d6" stroke-opacity="0.62" stroke-width="1" fill="none" shape-rendering="crispEdges"/>
  <g stroke="#0e0e0e" fill="none" stroke-linecap="round">
    <path d="M54 57.7 L88.8 163" stroke-width="2.6"/><path d="M88.8 163 L146.4 336 L149 342" stroke-width="1.9"/>
    <path d="M74.5 99 L93 143" stroke-width="2.2"/><path d="M93 143 L112 200" stroke-width="1.2" stroke-dasharray="5 4 2 7 3 9"/><path d="M262 73h1v1h-1zM264 74h1v2h-1zM265 76h1v1h-1z" stroke="none" fill="#5d6e6c"/>
    <path d="M149 342 L293 416.4 L519 535" stroke-width="2.5"/>
    <path d="M157 363.6 L412.3 497" stroke-width="2"/>
    <path d="M0 411 L376.2 603.8" stroke-width="2"/>
  </g>
  <path d="M292.6 415.4 L490.8 519.2" stroke="#ff00ff" stroke-width="3"/>
  <path d="M561.7 0 L584 64.8" stroke="#ff00ff" stroke-width="3"/>
  <path d="M491 520.4 L519 535.2" stroke="#ff1a00" stroke-width="2.8" stroke-dasharray="3.6 0.8"/><path d="M519.5 535.5 L584 570" stroke="#ff1a00" stroke-width="2.6" stroke-dasharray="2.8 2.6"/>
  <path d="M584 70 Q574 80 584 95" stroke="#ff1a00" stroke-width="2.4" fill="none"/>
  <!-- pose arrow -->
  <path d="M456.9 384.8 L508.8 408.5 L507.6 406.3 L522.8 416.4 L505.1 411.5 L507.6 411.0 L455.7 387.4 Z" fill="#ff1a00"/>
  <!-- axes -->
  <path d="M129.8 433.4 L133.9 447" stroke="#f00" stroke-width="2.5"/>
  <path d="M129.8 433.4 L143 429.3" stroke="#0f0" stroke-width="2.5"/>
  <rect x="128.5" y="432" width="2.5" height="2.5" fill="#00f"/>
  <!-- text -->
  <text x="271.7" y="264" font-family="Liberation Sans" font-size="8" fill="#fff">twist controller for robot</text>
  <!-- robot marker -->
<circle cx="319.3" cy="344.5" r="33.35" fill="none" stroke="#8c90dc" stroke-width="8.70"/>
<path d="M319.3 306.8L324.3 315.9L314.3 315.9ZM306.4 309.1L314.3 315.9L304.8 319.4ZM295.1 315.6L304.8 319.4L297.1 325.9ZM286.7 325.6L297.1 325.9L292.0 334.6ZM282.2 338.0L292.0 334.6L290.3 344.5ZM282.2 351.0L290.3 344.5L292.0 354.4ZM286.7 363.4L292.0 354.4L297.1 363.1ZM295.1 373.4L297.1 363.1L304.8 369.6ZM306.4 379.9L304.8 369.6L314.3 373.1ZM319.3 382.2L314.3 373.1L324.3 373.1ZM332.2 379.9L324.3 373.1L333.8 369.6ZM343.5 373.4L333.8 369.6L341.5 363.1ZM351.9 363.4L341.5 363.1L346.6 354.4ZM356.4 351.0L346.6 354.4L348.3 344.5ZM356.4 338.0L348.3 344.5L346.6 334.6ZM351.9 325.6L346.6 334.6L341.5 325.9ZM343.5 315.6L341.5 325.9L333.8 319.4ZM332.2 309.1L333.8 319.4L324.3 315.9Z" fill="#6066c4"/>
<path d="M346.6 351.9 L358.5 357.1 L359.9 354.1 L366.9 365.4 L353.8 367.8 L355.2 364.8 L343.3 359.6 Z" fill="#ff2a2a" fill-opacity="0.62"/>
<path d="M292.0 337.1 L280.1 331.9 L278.7 334.9 L271.7 323.6 L284.8 321.2 L283.4 324.2 L295.3 329.4 Z" fill="#ff2a2a" fill-opacity="0.62"/>
<path d="M311.1 329.4L336.1 339.2L326.8 360.7L302.4 349.1Z" fill="#454545" stroke="#222" stroke-width="0.8"/>
<path d="M310.5 330.8L335.4 340.7M303.0 347.7L327.5 359.2" stroke="#ffff00" stroke-width="3"/>
<circle cx="325" cy="346.8" r="2.6" fill="#9a9a9a"/>
</svg>

<!-- Views panel -->
<div class="hdr" style="left:944px;width:271px"></div>
<svg class="a" style="left:948px;top:74px" width="18" height="10" viewBox="0 0 18 10"><path d="M0 0.6 L6 4.5 L0 8.6 Z" fill="#444"/><rect x="5.3" y="0.7" width="10.8" height="7.8" rx="2.6" fill="#444"/></svg>
<div class="t" style="left:970px;top:67px;font-size:14.5px;line-height:22px;color:#4a4a4a">Views</div>
<div class="close" style="left:1199px;top:71px"></div>
<svg class="a" style="left:1199px;top:71px" width="13" height="14" viewBox="0 0 13 14"><path d="M3.9 4.3 L9.1 9.6 M9.1 4.3 L3.9 9.6" stroke="#5a5a5a" stroke-width="2.5" stroke-linecap="square"/></svg>
<div class="t" style="left:946px;top:100px;font-size:14.5px;line-height:19px">Type:</div>
<div class="btn" style="left:989px;top:96px;width:132px;height:25px;text-align:left;padding-left:5px;padding-top:1px;letter-spacing:0.45px">TopDownOrtho</div>
<svg class="a" style="left:1108px;top:104px" width="7" height="14"><path d="M0.4 3.6 L3.5 0.6 L6.6 3.6 Z M0.4 10 L3.5 13.1 L6.6 10 Z" fill="#505050"/></svg>
<div class="btn" style="left:1129px;top:96px;width:83px;height:25px;padding-top:1px">Zero</div>

<div class="a" style="left:944px;top:130px;width:271px;height:512px;background:#fff;border:1px solid #bcb9b3;border-right:none"></div>
<div class="a" style="left:965px;top:131px;width:250px;height:19px;background:#b9aca2"></div>
<div class="a" style="left:1078px;top:131px;width:1px;height:510px;background:#dedede"></div>
<div id="views"><svg class="a" style="left:953px;top:137px" width="9" height="8" viewBox="0 0 9 8"><path d="M1 1 L8 1 L4.5 6.8 Z" fill="#8a8a8a" stroke="#3a3a3a" stroke-width="1" stroke-linejoin="round"/></svg>
<div class="r" style="left:968px;top:132px;font-weight:bold;font-size:14.8px">Current View</div>
<div class="r" style="left:1082px;top:132px;font-weight:bold;font-size:14.8px">TopDownOrtho …</div>
<div class="r" style="left:988px;top:151px">Near Clip …</div>
<div class="r" style="left:1082px;top:151px">0.01</div>
<div class="r" style="left:988px;top:170px">Target Fra…</div>
<div class="r" style="left:1082px;top:170px">&lt;Fixed Frame&gt;</div>
<div class="r" style="left:988px;top:189px">Scale</div>
<div class="r" style="left:1082px;top:189px">58.3934</div>
<div class="r" style="left:988px;top:208px">Angle</div>
<div class="r" style="left:1082px;top:208px">1.2608</div>
<div class="r" style="left:988px;top:227px">X</div>
<div class="r" style="left:1082px;top:227px">-1.77742</div>
<div class="r" style="left:988px;top:246px">Y</div>
<div class="r" style="left:1082px;top:246px">2.74022</div></div><!--/views-->

<div class="btn" style="left:947px;top:649px;width:83px;height:25px">Save</div>
<div class="btn" style="left:1038px;top:649px;width:83px;height:25px">Remove</div>
<div class="btn" style="left:1129px;top:649px;width:83px;height:25px">Rename</div>

<!-- bottom splitter -->
<div class="a" style="left:604px;top:678px;width:1px;height:4px;background:#c8c5bf;box-shadow:3px 0 0 #c8c5bf,6px 0 0 #c8c5bf"></div>

<!-- Time panel -->
<div class="hdr" style="left:0;top:683px;width:1215px"></div>
<svg class="a" style="left:4px;top:687px" width="16" height="16" viewBox="0 0 16 16"><circle cx="7.9" cy="7.9" r="7" fill="#fff" stroke="#686868" stroke-width="1.7"/><path d="M7.4 4 V8.6 H11.8" stroke="#111" stroke-width="1.2" fill="none"/></svg>
<div class="t" style="left:26px;top:683px;font-size:14.5px;line-height:22px;color:#4a4a4a">Time</div>
<div class="close" style="left:1199px;top:687px"></div>
<svg class="a" style="left:1199px;top:687px" width="13" height="14" viewBox="0 0 13 14"><path d="M3.9 4.3 L9.1 9.6 M9.1 4.3 L3.9 9.6" stroke="#5a5a5a" stroke-width="2.5" stroke-linecap="square"/></svg>

<div class="t" style="left:11px;top:716px;font-size:14.5px;line-height:19px">ROS Time:</div>
<div class="inp" style="left:87px;width:127px">1714.79</div>
<div class="t" style="left:221px;top:716px;font-size:14.5px;line-height:19px">ROS Elapsed:</div>
<div class="inp" style="left:316px;width:127px">67.03</div>
<div class="t" style="left:450px;top:716px;font-size:14.5px;line-height:19px">Wall Time:</div>
<div class="inp" style="left:527px;width:127px">1426079087.42</div>
<div class="t" style="left:661px;top:716px;font-size:14.5px;line-height:19px">Wall Elapsed:</div>
<div class="inp" style="left:757px;width:127px">187.14</div>
<div class="a" style="left:1087px;top:718px;width:14px;height:14px;background:#fff;border:1px solid #9c9993;border-radius:3px"></div>
<div class="t" style="left:1109px;top:716px;font-size:14.5px;line-height:19px">Experimental</div>
<div class="a" style="left:0;top:745px;width:1215px;height:1px;background:#d8d5d0"></div>
<div class="btn" style="left:3px;top:749px;width:50px;height:23px;line-height:21px;padding-top:1px">Reset</div>
<div class="t" style="left:1151px;top:748px;font-size:14.5px;line-height:19px">11 fps</div>
<svg class="a" style="left:0;top:0" width="1215" height="775"><path d="M1212 762h1v1h-1zM1212 765h1v1h-1zM1209 765h1v1h-1zM1212 768h1v1h-1zM1209 768h1v1h-1zM1206 768h1v1h-1zM1212 771h1v1h-1zM1209 771h1v1h-1zM1206 771h1v1h-1zM1203 771h1v1h-1z" fill="#c4bfb8"/></svg>
</body></html>
